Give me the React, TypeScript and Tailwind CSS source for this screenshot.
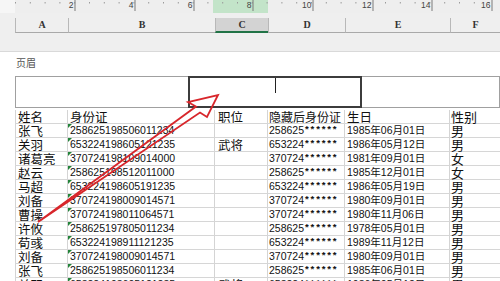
import React from "react";

const COLS = [
  { key: "A", w: "w-[53px]" },
  { key: "B", w: "w-[147px]" },
  { key: "C", w: "w-[53px]" },
  { key: "D", w: "w-[77px]" },
  { key: "E", w: "w-[105px]" },
  { key: "F", w: "w-[50px]" },
];

const ROWS = [
  ["张飞", "258625198506011234", "", "258625", "1985年06月01日", "男"],
  ["关羽", "653224198605121235", "武将", "653224", "1986年05月12日", "男"],
  ["诸葛亮", "370724198109014000", "", "370724", "1981年09月01日", "女"],
  ["赵云", "258625198512011000", "", "258625", "1985年12月01日", "女"],
  ["马超", "653224198605191235", "", "653224", "1986年05月19日", "男"],
  ["刘备", "370724198009014571", "", "370724", "1980年09月01日", "男"],
  ["曹操", "370724198011064571", "", "370724", "1980年11月06日", "男"],
  ["许攸", "258625197805011234", "", "258625", "1978年05月01日", "男"],
  ["荀彧", "653224198911121235", "", "653224", "1989年11月12日", "男"],
  ["刘备", "370724198009014571", "", "370724", "1980年09月01日", "男"],
  ["张飞", "258625198506011234", "", "258625", "1985年06月01日", "男"],
  ["关羽", "653224198605121235", "武将", "653224", "1986年05月12日", "男"],
];

const cjk = "font-['SimSun','Noto_Sans_CJK_SC',sans-serif]";
const num = "font-['Liberation_Sans','Noto_Sans_CJK_SC',sans-serif]";

function Ruler() {
  const major = [75, 135, 194, 253, 313, 373, 432, 492];
  const minor: number[] = [];
  for (let x = 15; x < 500; x += 14.8) minor.push(x);
  return (
    <svg width="500" height="13" className="block bg-[#eeeeee]">
      <rect x="0" y="0" width="15" height="13" fill="#f6f6f6" />
      <rect x="213" y="0" width="55" height="13" fill="#c3e4c9" />
      {minor.map((x) => (
        <rect key={x} x={x} y="2" width="1" height="1.5" fill="#9a9a9a" />
      ))}
      {major.map((x, i) => (
        <g key={x}>
          <line x1={x} y1="0" x2={x} y2="11" stroke="#7a7a7a" strokeWidth="1" />
          <text
            x={x - 1.5}
            y="8"
            textAnchor="end"
            fontSize="8.5"
            fill="#444"
            fontFamily="Liberation Sans, sans-serif"
          >
            {(i + 1) * 2}
          </text>
        </g>
      ))}
    </svg>
  );
}

function ColumnHeaders() {
  return (
    <div className="flex h-[15px] mt-[5px]">
      <div className="w-[15px] shrink-0" />
      {COLS.map((c) => (
        <div
          key={c.key}
          className={`${c.w} shrink-0 flex items-center justify-center border-l border-[#b8b8b8] border-b text-[10px] leading-[12px] font-bold text-[#333] font-['Liberation_Serif',serif] ${
            c.key === "C"
              ? "bg-[#d3d3d3] border-b-2 border-b-[#217346]"
              : "border-b-[#a9a9a9]"
          }`}
        >
          {c.key}
        </div>
      ))}
    </div>
  );
}

function HeaderBox() {
  return (
    <div className="flex h-[32px] ml-[15px] mt-[7px]">
      <div className="w-[173px] shrink-0 border border-[#a0a0a0] border-r-0" />
      <div className="w-[174px] shrink-0 border-2 border-[#3c3c3c] relative">
        <div className="absolute left-[85px] top-0 w-px h-[15px] bg-[#222]" />
      </div>
      <div className="flex-1 border border-[#a0a0a0] border-l-0" />
    </div>
  );
}

function Cell({
  w,
  children,
  className = "",
}: {
  w: string;
  children?: React.ReactNode;
  className?: string;
}) {
  return (
    <div
      className={`${w} shrink-0 h-full relative whitespace-nowrap leading-[13px] border-r border-[#d4d4d4] flex items-center ${className}`}
    >
      {children}
    </div>
  );
}

function Row({ r, header }: { r: string[]; header?: boolean }) {
  return (
    <div className="flex h-[14px] border-b border-[#d6d6d6] text-[#111]">
      <Cell w="w-[53px]" className={`pl-[2px] text-[12.5px] ${cjk} border-l border-l-[#d4d4d4]`}>
        {r[0]}
      </Cell>
      <Cell w="w-[147px]" className={header ? `pl-[2px] text-[12.5px] ${cjk}` : `pl-[2px] text-[10.5px] ${num}`}>
        {!header && (
          <div className="absolute left-0 top-0 w-0 h-0 border-t-[4px] border-r-[4px] border-t-[#23843a] border-r-transparent" />
        )}
        {r[1]}
      </Cell>
      <Cell w="w-[53px]" className={`pl-[3px] text-[12.5px] ${cjk}`}>
        {r[2]}
      </Cell>
      <Cell w="w-[77px]" className={header ? `pl-[1px] text-[12px] ${cjk}` : `pl-[1px] text-[10.5px] ${num}`}>
        {header ? (
          r[3]
        ) : (
          <>
            {r[3]}
            <span className="font-['Liberation_Mono',monospace] text-[9.6px] font-bold tracking-[-0.2px]">
              ******
            </span>
          </>
        )}
      </Cell>
      <Cell w="w-[105px]" className={header ? `pl-[2px] text-[12.5px] ${cjk}` : `pl-[2px] text-[10.5px] ${num}`}>
        {r[4]}
      </Cell>
      <Cell w="w-[50px]" className={`pl-[1px] text-[13px] ${cjk} border-r-0`}>
        {r[5]}
      </Cell>
    </div>
  );
}

function Arrow() {
  return (
    <svg
      width="500"
      height="281"
      className="absolute left-0 top-0 pointer-events-none"
    >
      <polygon
        points="38,222 196,106.5 188,102 218,95 207,117 200,112.5"
        fill="none"
        stroke="#d8262b"
        strokeWidth="1.8"
        strokeLinejoin="miter"
      />
    </svg>
  );
}

export default function App() {
  return (
    <div className="w-[500px] h-[281px] overflow-hidden relative bg-[#efefef]">
      <Ruler />
      <ColumnHeaders />
      <div className="h-[19px] border-b border-[#d9d9d9]" />
      <div className="bg-white h-[229px]">
        <div className={`pl-[16px] pt-[5px] h-[17px] text-[10px] leading-[12px] text-[#555] ${cjk}`}>
          页眉
        </div>
        <HeaderBox />
        <div className="ml-[15px] mt-[2px]">
          <Row header r={["姓名", "身份证", "职位", "隐藏后身份证", "生日", "性别"]} />
          {ROWS.map((r, i) => (
            <Row key={i} r={r} />
          ))}
        </div>
      </div>
      <Arrow />
    </div>
  );
}
